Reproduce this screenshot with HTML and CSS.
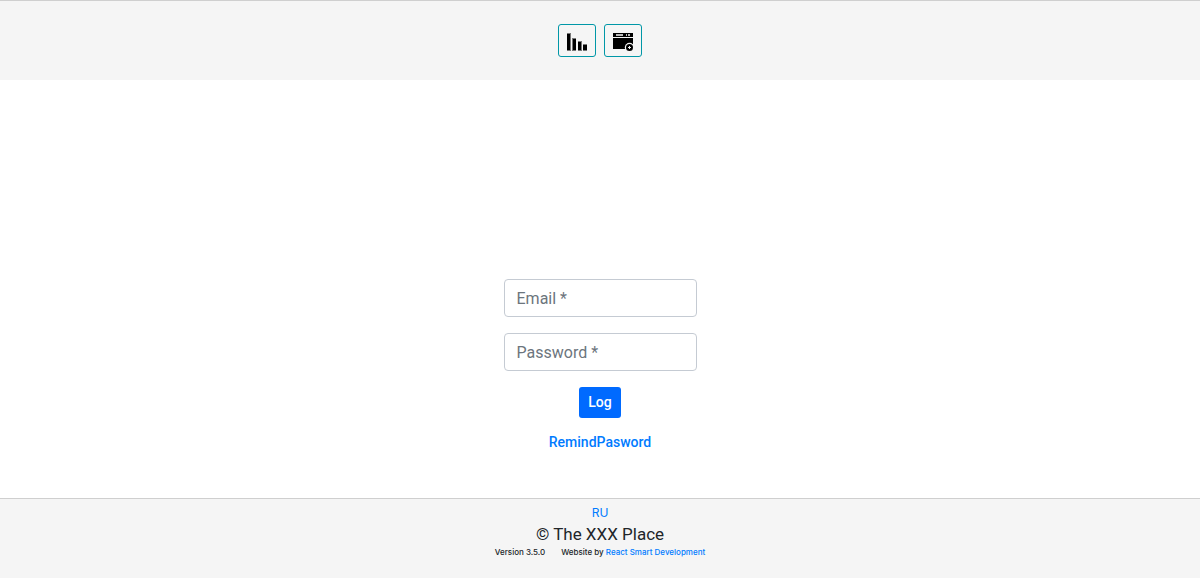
FILE: index.html
```html
<!DOCTYPE html>
<html lang="en">
<head>
<meta charset="utf-8">
<meta name="viewport" content="width=device-width, initial-scale=1">
<title>The XXX Place</title>
<link rel="stylesheet" href="styles.css">
</head>
<body>
<header class="topbar">
  <button class="icon-button" type="button" aria-label="Statistics">
    <svg class="icon" viewBox="0 0 22 18" aria-hidden="true">
      <path fill="#777" d="M1 0h4v18H1zM6 5h4v13H6zM12 8h4v10h-4zM17 11h4v7h-4z"/>
      <path d="M1 1h3v16H1zM7 6h3v11H7zM12 9h3v8h-3zM17 12h4v5h-4z"/>
    </svg>
  </button>
  <button class="icon-button" type="button" aria-label="Add page">
    <svg class="icon" viewBox="0 0 22 19" aria-hidden="true">
      <path d="M1 0h20v4H1zM1 5h20v11H1z"/>
      <path fill="#bbb" d="M4 1h7v2H4zM14 1h1v2h-1zM16 1h2v2h-2z"/>
      <circle cx="17.500" cy="14.500" r="4.700" fill="#f5f5f5"/>
      <circle cx="17.500" cy="14.500" r="3.500"/>
      <path fill="#f5f5f5" d="M17 13h1v1h1v1h-1v1h-1v-1h-1v-1h1z"/>
    </svg>
  </button>
</header>
<main class="content">
  <form class="login">
    <input class="field" type="email" placeholder="Email *" aria-label="Email">
    <input class="field" type="password" placeholder="Password *" aria-label="Password">
    <button class="submit" type="button">Log</button>
    <a class="remind" href="#remind">RemindPasword</a>
  </form>
</main>
<footer class="footer">
  <a class="language" href="#ru">RU</a>
  <div class="owner">© The XXX Place</div>
  <div class="credits">
    <span>Version 3.5.0</span>
    <span>Website by <a href="#developer">React Smart Development</a></span>
  </div>
</footer>
</body>
</html>
```
FILE: styles.css
```css
* {
  box-sizing: border-box;
}

body {
  margin: 0;
  min-height: 100vh;
  display: flex;
  flex-direction: column;
  font-family: Inter, "Liberation Sans", sans-serif;
  font-size: 16px;
  line-height: 24px;
  color: #212529;
  background: #fff;
}

button,
input {
  font: inherit;
}

a {
  color: #007bff;
  text-decoration: none;
}

.topbar {
  display: flex;
  justify-content: center;
  gap: 8px;
  padding: 23px 16px;
  border-top: 1px solid #cfcfcf;
  background: #f5f5f5;
}

.icon-button {
  width: 38px;
  height: 33px;
  padding: 8px 7px;
  border: 1px solid #0097a7;
  border-radius: 3px;
  background: transparent;
}

.icon {
  display: block;
  width: 22px;
  height: auto;
}

.content {
  flex: 1;
  display: flex;
  flex-direction: column;
  justify-content: flex-end;
  align-items: center;
  padding: 48px 16px 45px;
}

.login {
  display: flex;
  flex-direction: column;
  align-items: center;
  gap: 16px;
}

.field {
  width: 193px;
  height: 38px;
  padding: 6px 12px;
  border: 1px solid #c5cbd3;
  border-radius: 4px;
  font-family: Roboto, "Liberation Sans", sans-serif;
  font-size: 16px;
  color: #495057;
  background: #fff;
}

.field::placeholder {
  color: #6c757d;
  opacity: 1;
}

.submit {
  padding: 5px 9px;
  border: 0;
  border-radius: 3px;
  font-family: Roboto, "Liberation Sans", sans-serif;
  font-size: 14px;
  font-weight: 500;
  line-height: 21px;
  color: #fff;
  background: #006aff;
}

.remind {
  margin-top: -3px;
  font-family: Roboto, "Liberation Sans", sans-serif;
  font-size: 14px;
  font-weight: 500;
  line-height: 22px;
}

.footer {
  display: flex;
  flex-direction: column;
  align-items: center;
  padding: 4px 16px 20px;
  border-top: 1px solid #cfcfcf;
  background: #f5f5f5;
}

.language {
  font-size: 12px;
  line-height: 20px;
}

.owner {
  font-family: Roboto, "Liberation Sans", sans-serif;
  font-size: 17px;
  line-height: 23px;
}

.credits {
  display: flex;
  gap: 16px;
  font-size: 8px;
  font-weight: 500;
  line-height: 12px;
}
```
